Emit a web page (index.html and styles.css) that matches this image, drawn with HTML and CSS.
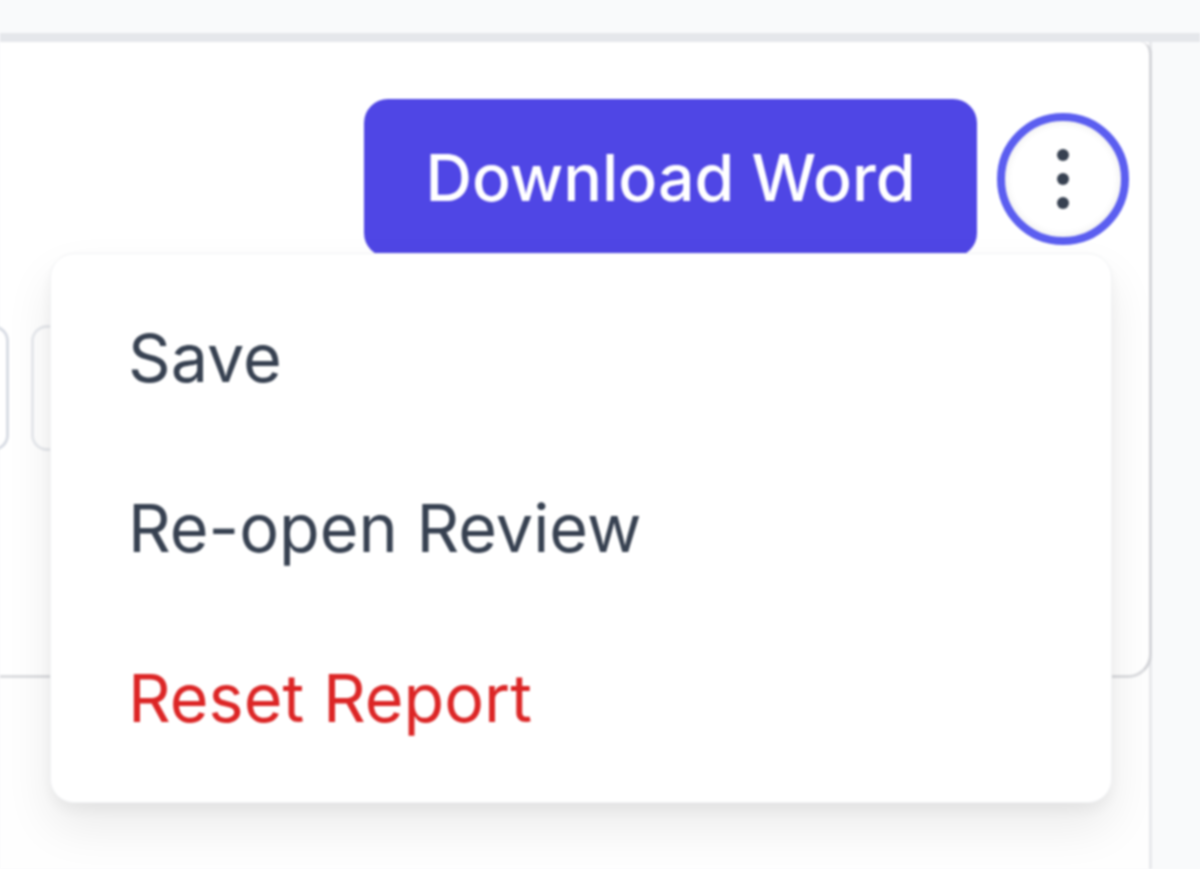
FILE: index.html
```html
<!DOCTYPE html>
<html lang="en">
<head>
  <meta charset="UTF-8" />
  <meta name="viewport" content="width=device-width, initial-scale=1.0" />
  <title>Report</title>
  <link rel="stylesheet" href="styles.css">
</head>
<body>
  <div class="page">
    <div class="topbar"></div>
    <div class="content">
      <main class="main">
        <section class="card">
          <div class="toolbar">
            <button class="download">Download Word</button>
            <button class="kebab" aria-label="More">
              <svg width="30" height="68" viewBox="0 0 30 68">
                <circle cx="15" cy="10" r="6" />
                <circle cx="15" cy="34" r="6" />
                <circle cx="15" cy="58" r="6" />
              </svg>
            </button>
            <div class="menu">
              <a class="menu-item">Save</a>
              <a class="menu-item">Re-open Review</a>
              <a class="menu-item danger">Reset Report</a>
            </div>
          </div>
          <div class="fields">
            <div class="field"></div>
            <div class="field"></div>
          </div>
        </section>
      </main>
      <aside class="side"></aside>
    </div>
  </div>
</body>
</html>
```

FILE: styles.css
```css
* {
  box-sizing: border-box;
}
html, body {
  margin: 0;
  height: 100%;
  overflow: hidden;
}
body {
  font-family: Inter, "Liberation Sans", sans-serif;
  background-color: #f9fafb;
}
.page {
  display: flex;
  flex-direction: column;
  height: 869px;
  filter: blur(1px);
}
.topbar {
  flex: 0 0 42px;
  background: #f9fafb;
  border-bottom: 9px solid #e5e7eb;
}
.content {
  flex: 1;
  display: flex;
}
.main {
  flex: 0 0 1152px;
  background: #fefefe;
  border-right: 3px solid #e8e9ec;
}
.side {
  flex: 1;
  background: #f9fafb;
}
.card {
  height: 636px;
  margin-right: -3px;
  background: #ffffff;
  border-right: 3px solid #d4d5d9;
  border-bottom: 3px solid #dcdde0;
  border-bottom-right-radius: 24px;
  border-top-right-radius: 12px;
  padding: 57px 20px 0 0;
}
.toolbar {
  position: relative;
  display: flex;
  justify-content: flex-end;
  align-items: center;
  gap: 20px;
  height: 158px;
}
.download {
  width: 613px;
  height: 158px;
  background: #4f46e5;
  color: #ffffff;
  font-family: inherit;
  font-size: 64.5px;
  font-weight: 500;
  border: none;
  border-radius: 24px;
}
.kebab {
  display: flex;
  align-items: center;
  justify-content: center;
  width: 132px;
  height: 132px;
  margin-top: 2px;
  padding: 0;
  background: #ffffff;
  border: 8px solid #5b5ef0;
  border-radius: 50%;
  box-shadow: inset 0 0 8px rgba(0,0,0,0.1);
}
.kebab circle {
  fill: #374151;
}
.menu {
  position: absolute;
  top: 154px;
  right: 17px;
  width: 1062px;
  height: 550px;
  padding: 19px 0;
  background: #ffffff;
  border: 1px solid #f1f2f4;
  border-radius: 24px;
  box-shadow: 0 24px 48px rgba(0,0,0,0.08), 0 8px 16px rgba(0,0,0,0.05);
  z-index: 10;
}
.menu-item {
  display: block;
  height: 170px;
  padding-left: 77px;
  line-height: 170px;
  font-size: 66.5px;
  color: #374151;
}
.danger {
  color: #dc2626;
}
.fields {
  display: flex;
  gap: 22px;
  margin: 68px 0 0 -100px;
}
.field {
  width: 109px;
  height: 126px;
  background: #ffffff;
  border: 3px solid #d8dce4;
  border-radius: 16px;
}
.field + .field {
  width: 300px;
  border-color: #e8eaee;
}
```
